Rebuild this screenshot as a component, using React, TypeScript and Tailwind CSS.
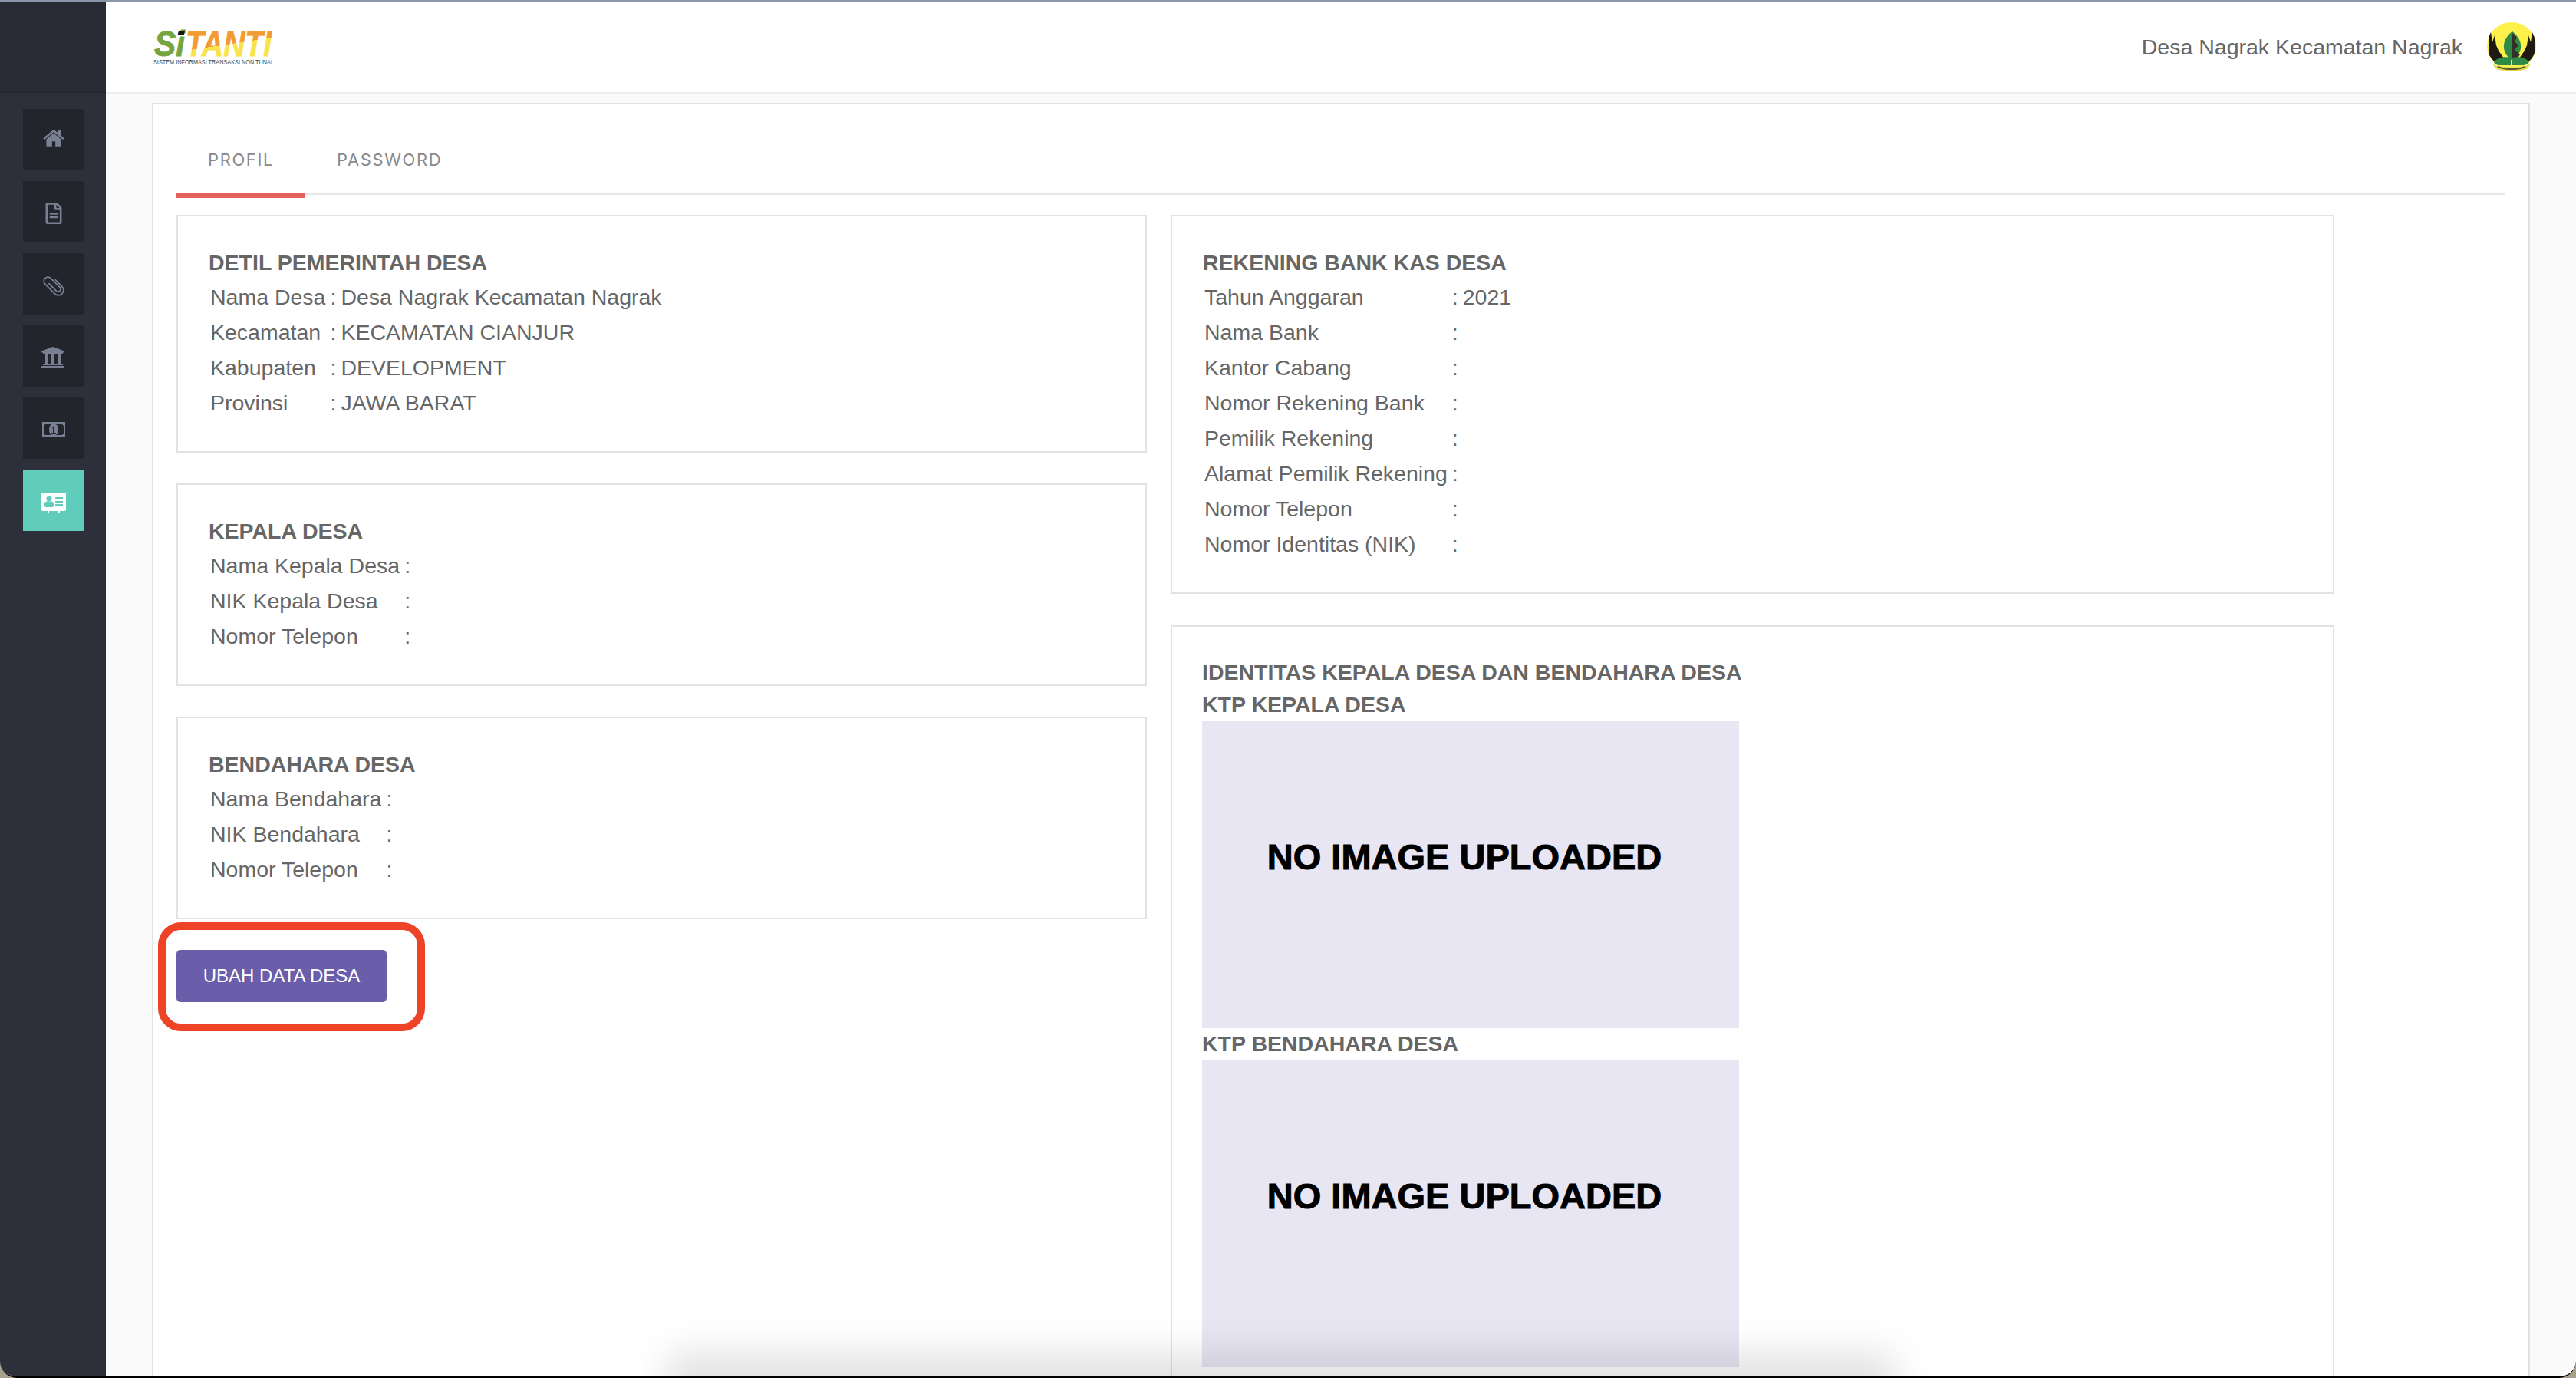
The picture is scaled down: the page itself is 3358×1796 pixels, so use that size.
import { FaRegFileAlt, FaUniversity } from 'react-icons/fa'

const iconColor = '#7a8094'

function HomeIcon() {
  return (
    <svg viewBox="0 0 1792 1792" className="w-[30px] h-[30px] -mt-[4px]" fill={iconColor}>
      <path d="M1472 992v480q0 26-19 45t-45 19h-384v-384h-256v384h-384q-26 0-45-19t-19-45v-480q0-1 .5-3t.5-3l575-474 575 474q1 2 1 6zm223-69l-62 74q-8 9-21 11h-3q-13 0-21-7l-692-577-692 577q-12 8-24 7-13-2-21-11l-62-74q-8-10-7-23.5t11-22.5l719-599q32-26 76-26t76 26l244 204v-195q0-14 9-23t23-9h192q14 0 23 9t9 23v408l219 182q10 8 11 21.5t-7 23.5z" />
    </svg>
  )
}

function ClipIcon() {
  return (
    <svg viewBox="0 0 24 24" className="w-[32px] h-[32px] mt-[3px]" fill="none" stroke={iconColor} strokeWidth="1.3" strokeLinecap="round">
      <g transform="rotate(-45 12 12)">
        <path d="M10 7v10a2.5 2.5 0 0 0 5 0V4.5a4 4 0 0 0-8 0V18a5 5 0 0 0 10 0V9" transform="translate(0 0.5)" />
      </g>
    </svg>
  )
}

function MoneyIcon() {
  return (
    <svg viewBox="0 0 30 20" className="w-[30px] h-[20px] mt-[4px]">
      <rect width="30" height="20" fill={iconColor} />
      <path d="M4 3h22l2 2v10l-2 2H4l-2-2V5z" fill="#22252c" />
      <ellipse cx="15" cy="10" rx="6" ry="8" fill={iconColor} />
      <path d="M13 6.5l3-1.5v9h2v1.5h-6V14h2V7.5l-1 .5z" fill="#22252c" />
    </svg>
  )
}

function CardIcon() {
  return (
    <svg viewBox="0 0 32 26" className="w-[32px] h-[26px] mt-[5px]">
      <path d="M2 0h28a2 2 0 0 1 2 2v20a2 2 0 0 1-2 2h-6v2h-2v-2H10v2H8v-2H2a2 2 0 0 1-2-2V2a2 2 0 0 1 2-2z" fill="#fff" />
      <circle cx="10" cy="8" r="3.6" fill="#5fcdb9" />
      <path d="M4 14a3 3 0 0 1 3-2.5h6a3 3 0 0 1 3 2.5v3a2 2 0 0 1-2 2H6a2 2 0 0 1-2-2z" fill="#5fcdb9" />
      <path d="M18 6h10v2H18zM18 11h10v2H18zM18 15h10v2H18z" fill="#5fcdb9" />
    </svg>
  )
}

function Logo() {
  return (
    <svg width="158" height="48" viewBox="0 0 158 48" className="overflow-visible">
      <defs>
        <linearGradient id="tanti" gradientUnits="userSpaceOnUse" x1="93" y1="11" x2="96" y2="31">
          <stop offset="0.5" stopColor="#f29a33" />
          <stop offset="0.5" stopColor="#f9e34c" />
        </linearGradient>
      </defs>
      <text x="1" y="36" fontFamily="Liberation Sans" fontWeight="700" fontStyle="italic" fontSize="46" textLength="40" lengthAdjust="spacingAndGlyphs" fill="#76a440" stroke="#76a440" strokeWidth="0.8">Si</text>
      <polygon points="33,3 41,3 39.5,9 31.5,9" fill="#111" />
      <text x="42" y="36" fontFamily="Liberation Sans" fontWeight="700" fontStyle="italic" fontSize="46" textLength="112" lengthAdjust="spacingAndGlyphs" fill="url(#tanti)" stroke="url(#tanti)" strokeWidth="0.8">TANTI</text>
      <text x="0" y="47" fontFamily="Liberation Sans" fontSize="8.5" textLength="155" lengthAdjust="spacingAndGlyphs" fill="#444">SISTEM INFORMASI TRANSAKSI NON TUNAI</text>
    </svg>
  )
}

function Emblem() {
  return (
    <svg width="64" height="64" viewBox="0 0 64 64">
      <ellipse cx="32" cy="31" rx="32" ry="31" fill="#fdf04a" />
      <path d="M2 40L2 20L5 13L7 26L10 17L12 30L15 37L22 47L12 53Q4 47 2 40z" fill="#1f1a14" />
      <path d="M62 40L62 20L59 13L57 26L54 17L52 30L49 37L42 47L52 53Q60 47 62 40z" fill="#1f1a14" />
      <path d="M33 12c8 6 12 14 11 22-1 6-5 12-11 16-6-4-10-10-11-16-1-8 3-16 11-22z" fill="#2f8a45" />
      <path d="M33 14v38c4-2 7-5 10-10l-7-6 5-6-5-5 3-5z" fill="#33302a" />
      <path d="M9 52c4-6 12-8 22-6v10H16c-3 0-6-2-7-4zM55 52c-4-6-12-8-22-6v10h14c3 0 6-2 8-4z" fill="#2f8a45" />
      <path d="M7 54c8 6 42 6 50 0l-4 6c-8 5-34 5-42 0z" fill="#e2da4a" />
      <path d="M14 58c10 4 26 4 36 0" stroke="#5a5a30" strokeWidth="2" fill="none" />
    </svg>
  )
}

const navItems = [
  { icon: <HomeIcon /> },
  { icon: <FaRegFileAlt className="w-[26px] h-[28px] mt-[3px]" color={iconColor} /> },
  { icon: <ClipIcon /> },
  { icon: <FaUniversity className="w-[32px] h-[32px] mt-[3px] -ml-[3px]" color={iconColor} /> },
  { icon: <MoneyIcon /> },
  { icon: <CardIcon />, active: true },
]

function InfoCard({ title, rows }: { title: string; rows: string[][] }) {
  return (
    <div className="border-2 border-[#e2e2e2] bg-white p-10">
      <h3 className="h-10 leading-10 font-bold text-[#666666]">{title}</h3>
      <table className="mt-[2px] text-[#666666]">
        <tbody>
          {rows.map(([label, value]) => (
            <tr key={label} className="h-[46px]">
              <td className="pl-[2px] pr-[6px] whitespace-nowrap">{label}</td>
              <td className="pr-[6px]">:</td>
              <td>{value}</td>
            </tr>
          ))}
        </tbody>
      </table>
    </div>
  )
}

function NoImage() {
  return (
    <div className="w-[700px] h-[400px] bg-[#e8e6f3] flex items-center justify-center pb-[46px] pr-[16px]">
      <span className="text-[47px] font-bold text-black [-webkit-text-stroke:1px_black]">NO IMAGE UPLOADED</span>
    </div>
  )
}

export default function App() {
  return (
    <div className="w-[3358px] h-[1796px] bg-[#a89f8c] overflow-hidden relative font-['Liberation_Sans',Arial,sans-serif] text-[28.5px]">
      <div className="h-[1796px] border-b-2 border-black rounded-b-[22px] overflow-hidden flex flex-col bg-[#fafafa]">
        <div className="h-[2px] shrink-0 bg-[#8b95a9]" />
        <div className="flex flex-1 min-h-0">
          <aside className="w-[138px] shrink-0 bg-[#2d303b] flex flex-col">
            <div className="h-[119px] bg-[#282b35] border-b border-[#22242c] shrink-0" />
            <nav className="pt-[21px] pl-[30px] flex flex-col gap-[14px]">
              {navItems.map((item, i) => (
                <div key={i} className={`w-[80px] h-[80px] flex items-center justify-center ${item.active ? 'bg-[#5fcdb9]' : 'bg-[#22252c]'}`}>
                  {item.icon}
                </div>
              ))}
            </nav>
          </aside>

          <div className="flex-1 min-w-0 flex flex-col">
            <header className="h-[120px] shrink-0 bg-white border-b-2 border-[#eeeeee] flex items-center justify-between pl-[62px] pr-[52px]">
              <Logo />
              <div className="flex items-center gap-[32px] text-[#666666]">
                <span>Desa Nagrak Kecamatan Nagrak</span>
                <Emblem />
              </div>
            </header>

            <main className="flex-1 min-h-0 pt-[12px] pl-[60px]">
              <div className="w-[3100px] h-[1700px] border-2 border-[#e2e2e2] bg-white px-[30px] overflow-hidden">
                <div className="flex h-[118px] border-b-2 border-[#e6e6e6] font-['Inter',sans-serif] text-[22px] tracking-[1.6px] text-[#8a8a8a]">
                  <div className="w-[168px] h-[122px] pt-[56px] text-center border-b-[6px] border-[#e5625c]">PROFIL</div>
                  <div className="pl-[41px] pt-[56px]">PASSWORD</div>
                </div>

                <div className="grid grid-cols-[1265px_1517px] gap-x-[31px] mt-[26px]">
                  <div className="flex flex-col gap-10 items-start">
                    <div className="w-full flex flex-col gap-10">
                      <InfoCard
                        title="DETIL PEMERINTAH DESA"
                        rows={[
                          ['Nama Desa', 'Desa Nagrak Kecamatan Nagrak'],
                          ['Kecamatan', 'KECAMATAN CIANJUR'],
                          ['Kabupaten', 'DEVELOPMENT'],
                          ['Provinsi', 'JAWA BARAT'],
                        ]}
                      />
                      <InfoCard
                        title="KEPALA DESA"
                        rows={[
                          ['Nama Kepala Desa', ''],
                          ['NIK Kepala Desa', ''],
                          ['Nomor Telepon', ''],
                        ]}
                      />
                      <InfoCard
                        title="BENDAHARA DESA"
                        rows={[
                          ['Nama Bendahara', ''],
                          ['NIK Bendahara', ''],
                          ['Nomor Telepon', ''],
                        ]}
                      />
                    </div>
                    <div className="relative">
                      <button className="w-[274px] h-[68px] bg-[#6a5eaa] rounded-[5px] text-white text-[24px]">UBAH DATA DESA</button>
                      <div className="absolute left-[-24px] top-[-36px] w-[348px] h-[142px] border-[10px] border-[#ee4326] rounded-[30px]" />
                    </div>
                  </div>

                  <div className="flex flex-col gap-[41px]">
                    <InfoCard
                      title="REKENING BANK KAS DESA"
                      rows={[
                        ['Tahun Anggaran', '2021'],
                        ['Nama Bank', ''],
                        ['Kantor Cabang', ''],
                        ['Nomor Rekening Bank', ''],
                        ['Pemilik Rekening', ''],
                        ['Alamat Pemilik Rekening', ''],
                        ['Nomor Telepon', ''],
                        ['Nomor Identitas (NIK)', ''],
                      ]}
                    />
                    <div className="border-2 border-[#e2e2e2] bg-white pt-[39px] pb-10 pl-[39px] pr-10 font-bold text-[#666666]">
                      <div className="h-10 leading-10">IDENTITAS KEPALA DESA DAN BENDAHARA DESA</div>
                      <div className="h-10 leading-10 mt-[2px]">KTP KEPALA DESA</div>
                      <div className="mt-[2px]"><NoImage /></div>
                      <div className="h-[42px] leading-10">KTP BENDAHARA DESA</div>
                      <NoImage />
                    </div>
                  </div>
                </div>
              </div>
            </main>
          </div>
        </div>
      </div>
      <div className="absolute left-[900px] top-[1794px] w-[1540px] h-[20px] shadow-[0_0_50px_30px_rgba(0,0,0,0.12)] pointer-events-none" />
    </div>
  )
}
